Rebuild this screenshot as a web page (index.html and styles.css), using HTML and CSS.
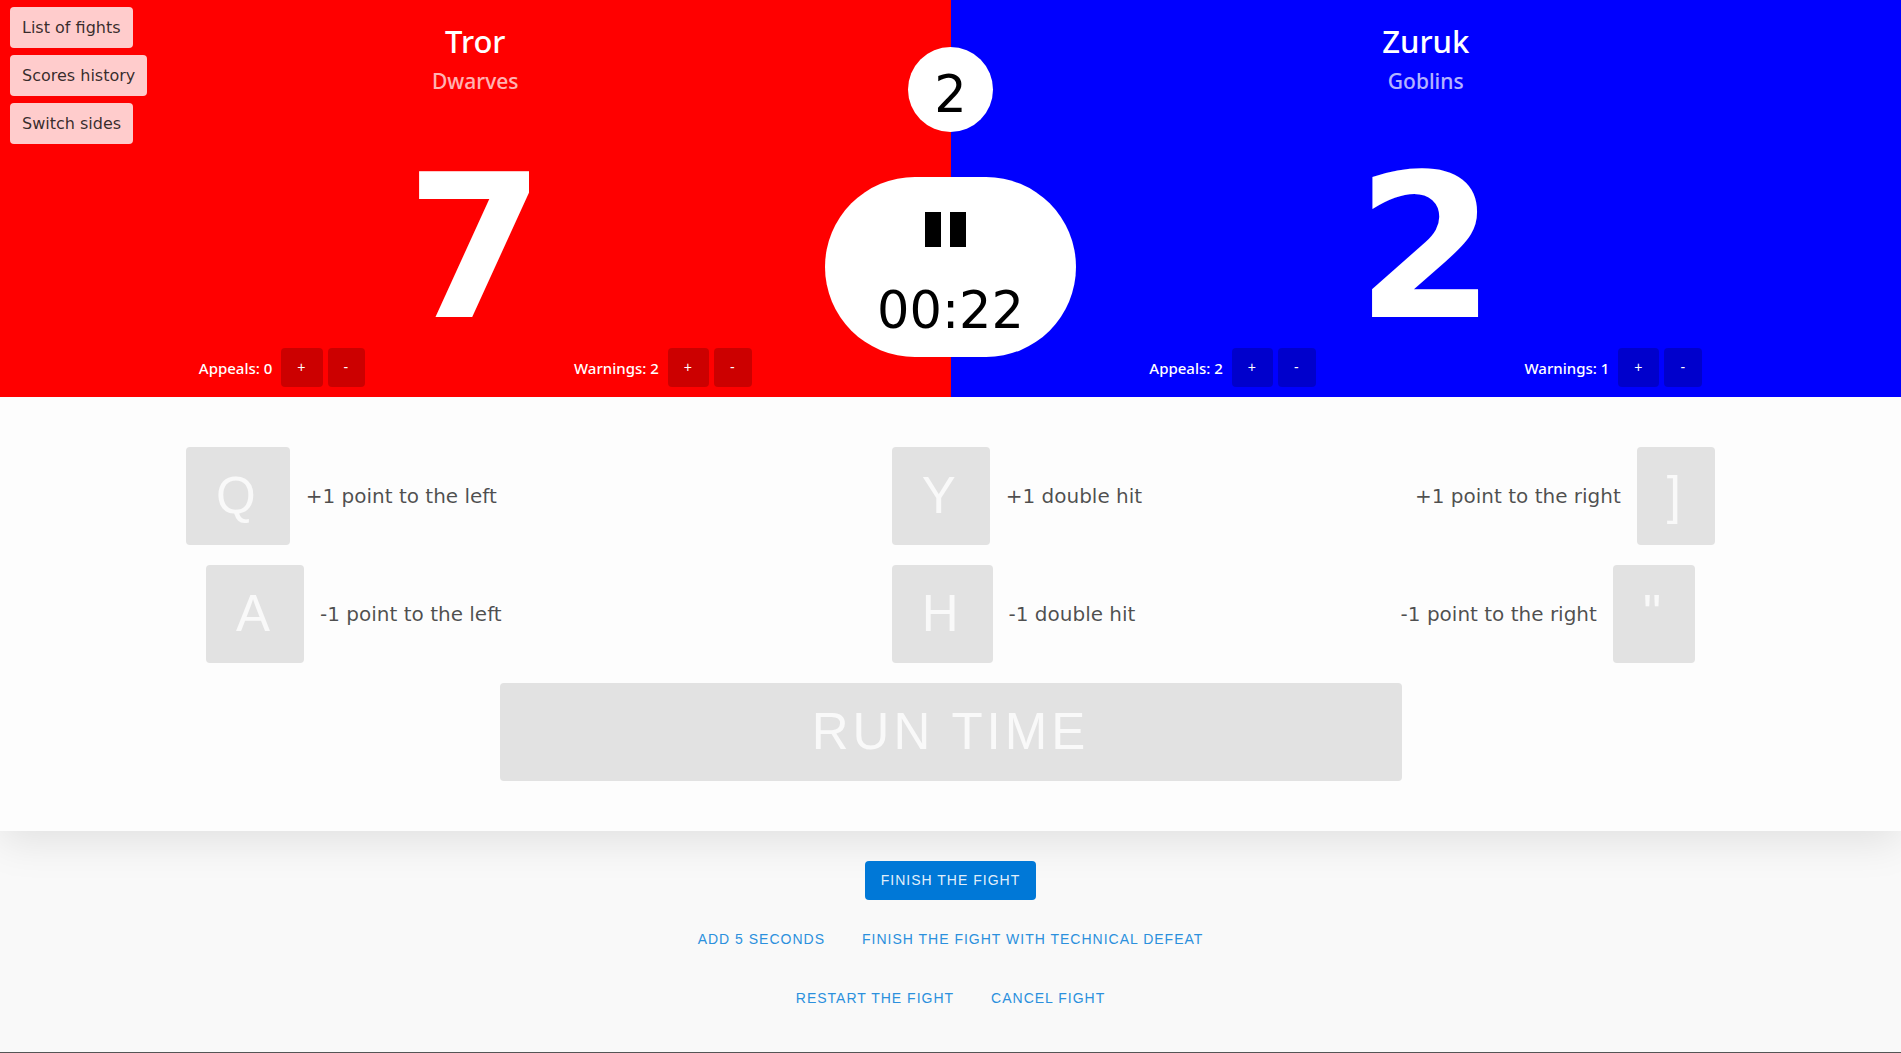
FILE: index.html
```html
<!DOCTYPE html>
<html lang="en">
<head>
  <meta charset="utf-8">
  <meta name="viewport" content="width=device-width, initial-scale=1">
  <title>Fight</title>
  <link rel="stylesheet" href="styles.css">
</head>
<body>
  <header class="scoreboard">
    <section class="side side-red">
      <h2 class="fighter">Tror</h2>
      <p class="team">Dwarves</p>
      <div class="score">7</div>
      <div class="counters">
        <div class="counter"><span class="counter-label">Appeals: 0</span><button class="btn btn-dark" type="button">+</button><button class="btn btn-dark" type="button">-</button></div>
        <div class="counter"><span class="counter-label">Warnings: 2</span><button class="btn btn-dark" type="button">+</button><button class="btn btn-dark" type="button">-</button></div>
      </div>
    </section>
    <section class="side side-blue">
      <h2 class="fighter">Zuruk</h2>
      <p class="team">Goblins</p>
      <div class="score">2</div>
      <div class="counters">
        <div class="counter"><span class="counter-label">Appeals: 2</span><button class="btn btn-dark" type="button">+</button><button class="btn btn-dark" type="button">-</button></div>
        <div class="counter"><span class="counter-label">Warnings: 1</span><button class="btn btn-dark" type="button">+</button><button class="btn btn-dark" type="button">-</button></div>
      </div>
    </section>
    <div class="center">
      <div class="doubles">2</div>
      <div class="clock">
        <svg class="pause" width="41" height="35" viewBox="0 0 41 35" role="img" aria-label="Paused"><path d="M0 0h16v35H0zM25 0h16v35H25z"/></svg>
        <time>00:22</time>
      </div>
    </div>
    <nav class="menu">
      <button class="menu-btn" type="button">List of fights</button>
      <button class="menu-btn" type="button">Scores history</button>
      <button class="menu-btn" type="button">Switch sides</button>
    </nav>
  </header>

  <main class="panel">
    <div class="keys">
      <div class="key-item"><button class="key" type="button" id="key-q">Q</button><label for="key-q">+1 point to the left</label></div>
      <div class="key-item"><button class="key" type="button" id="key-y">Y</button><label for="key-y">+1 double hit</label></div>
      <div class="key-item key-right"><label for="key-bracket">+1 point to the right</label><button class="key" type="button" id="key-bracket">]</button></div>
      <div class="key-item key-shifted"><button class="key" type="button" id="key-a">A</button><label for="key-a">-1 point to the left</label></div>
      <div class="key-item"><button class="key" type="button" id="key-h">H</button><label for="key-h">-1 double hit</label></div>
      <div class="key-item key-right key-shifted"><label for="key-quote">-1 point to the right</label><button class="key" type="button" id="key-quote">"</button></div>
    </div>
    <button class="key key-space" type="button">RUN TIME</button>
  </main>

  <footer class="actions">
    <div class="action-row"><button class="btn btn-primary" type="button">FINISH THE FIGHT</button></div>
    <div class="action-row">
      <button class="btn btn-link" type="button">ADD 5 SECONDS</button>
      <button class="btn btn-link" type="button">FINISH THE FIGHT WITH TECHNICAL DEFEAT</button>
    </div>
    <div class="action-row">
      <button class="btn btn-link" type="button">RESTART THE FIGHT</button>
      <button class="btn btn-link" type="button">CANCEL FIGHT</button>
    </div>
  </footer>
</body>
</html>
```
FILE: styles.css
```css
*,
*::before,
*::after {
  box-sizing: border-box;
}

body {
  margin: 0;
  min-height: 100vh;
  background: #f9f9f9;
  border-bottom: 1px solid #555;
  color: rgba(0, 0, 0, 0.7);
  font: 16px/24px "DejaVu Sans", Verdana, sans-serif;
}

button {
  border: 0;
  border-radius: 4px;
  cursor: pointer;
}

/* Scoreboard */

.scoreboard {
  position: relative;
  z-index: 1;
  display: grid;
  grid-template-columns: 1fr 1fr;
  color: #fff;
}

.side {
  padding: 18px 0 10px;
  text-align: center;
}

.side-red {
  background: #f00;
}

.side-blue {
  background: #00f;
}

.fighter {
  margin: 0;
  font: 500 31px/46px "Noto Sans", sans-serif;
}

.team {
  margin: 0;
  font: 500 21px/34px "Noto Sans", sans-serif;
  opacity: 0.7;
}

.score {
  margin-top: 50px;
  font-size: 200px;
  font-weight: 700;
  line-height: 200px;
}

.counters {
  display: flex;
  justify-content: space-evenly;
  gap: 10px;
}

.counter {
  display: flex;
  align-items: center;
  gap: 5px;
  font: 500 15px/20px "Noto Sans", sans-serif;
}

.counter-label {
  margin-right: 4px;
}

.center {
  position: absolute;
  inset: 0;
  display: flex;
  flex-direction: column;
  align-items: center;
  gap: 45px;
  padding-top: 47px;
  color: #000;
  font-size: 51px;
  line-height: 60px;
  pointer-events: none;
}

.doubles {
  width: 85px;
  height: 85px;
  padding-top: 18px;
  border-radius: 50%;
  background: #fff;
  text-align: center;
}

.clock {
  display: flex;
  flex-direction: column;
  align-items: center;
  gap: 34px;
  padding: 35px 52px 16px;
  border-radius: 90px;
  background: #fff;
}

.pause {
  margin-right: 10px;
}

.menu {
  position: absolute;
  top: 7px;
  left: 10px;
  display: flex;
  flex-direction: column;
  align-items: flex-start;
  gap: 7px;
}

.menu-btn {
  padding: 8px 12px;
  background: rgba(255, 255, 255, 0.8);
  color: rgba(0, 0, 0, 0.8);
  font: 16px/25px "DejaVu Sans", Verdana, sans-serif;
}

/* Buttons */

.btn {
  padding: 0 16px;
  font: 14px/39px "Liberation Sans", Arial, sans-serif;
  letter-spacing: 1px;
}

.btn-dark {
  background: rgba(0, 0, 0, 0.2);
  color: #fff;
}

.btn-primary {
  background: #0078d7;
  color: rgba(255, 255, 255, 0.9);
}

.btn-link {
  background: none;
  color: #2b90dd;
}

/* Keyboard panel */

.panel {
  display: flex;
  flex-direction: column;
  align-items: center;
  gap: 20px;
  padding: 50px 0;
  background: #fdfdfd;
  box-shadow: 0 10px 40px rgba(0, 0, 0, 0.1);
}

.keys {
  display: grid;
  grid-template-columns: 6fr 3fr 4fr;
  gap: 20px 0;
  width: 100%;
  padding: 0 186px;
}

.key-item {
  display: flex;
  align-items: center;
  gap: 16px;
  font-size: 20px;
  white-space: nowrap;
}

.key-right {
  justify-content: flex-end;
}

.key-shifted {
  padding: 0 20px;
}

.key {
  padding: 0 30px;
  background: #e2e2e2;
  color: #f9f9f9;
  font: 51px/98px "Liberation Sans", Arial, sans-serif;
  letter-spacing: 4px;
}

.key-space {
  width: 902px;
  max-width: 100%;
}

/* Fight actions */

.actions {
  display: flex;
  flex-direction: column;
  gap: 20px;
  padding: 30px 0;
}

.action-row {
  display: flex;
  justify-content: center;
  gap: 5px;
}
```
